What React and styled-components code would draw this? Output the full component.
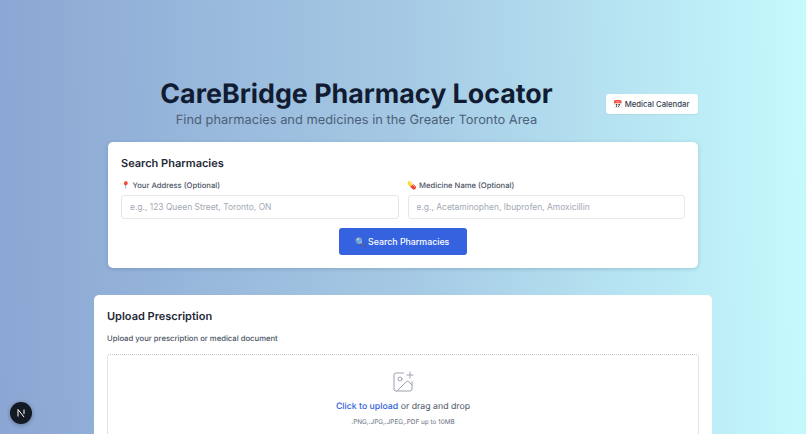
import React from "react";
import styled, { createGlobalStyle } from "styled-components";
import { ImagePlus } from "lucide-react";

const Global = createGlobalStyle`
  html, body { margin: 0; height: 100%; overflow: hidden; }
  body { font-family: Inter, "Liberation Sans", sans-serif; text-rendering: geometricPrecision; }
  * { box-sizing: border-box; }
`;

const Page = styled.div`
  width: 806px;
  height: 434px;
  overflow: hidden;
  background: linear-gradient(89deg, #8ba6d3 0%, #a5c9e4 50%, #c5fafd 100%);
  padding-top: 78px;
  display: flex;
  flex-direction: column;
  align-items: center;
`;

const Header = styled.header`
  width: 590px;
  height: 64px;
  flex: none;
  display: flex;
  align-items: flex-start;
`;

const TitleBlock = styled.div`
  flex: 1;
  padding-right: 1px;
  text-align: center;
`;

const Title = styled.h1`
  margin: 0;
  font-size: 26.8px;
  line-height: 30px;
  padding-top: 1px;
  font-weight: 700;
  color: #111c33;
`;

const Subtitle = styled.p`
  margin: 2px 0 0;
  font-size: 12.86px;
  line-height: 20px;
  color: #4d6079;
`;

const CalendarButton = styled.button`
  width: 92px;
  height: 20px;
  margin-top: 16px;
  border: 0;
  border-radius: 3px;
  background: #fff;
  color: #374151;
  font: 500 7.75px Inter, sans-serif;
  padding: 0 2px 0 0;
  box-shadow: 0 1px 2px rgba(0,0,0,.06);
`;

const SearchCard = styled.section`
  width: 590px;
  height: 126px;
  flex: none;
  background: #fff;
  border-radius: 5px;
  padding: 14px 13px;
  box-shadow: 0 1px 4px rgba(30,60,100,.2);
`;

const CardTitle = styled.h2`
  margin: 0;
  font-size: 11px;
  line-height: 15px;
  font-weight: 600;
  color: #1f2937;
`;

const Fields = styled.div`
  display: grid;
  grid-template-columns: 1fr 1fr;
  gap: 9px;
  margin-top: 8px;
`;

const Field = styled.div`
  display: flex;
  flex-direction: column;
  gap: 3px;
`;

const Label = styled.label`
  font-size: 7.65px;
  line-height: 13px;
  font-weight: 500;
  color: #4b5563;
`;

const Input = styled.input`
  height: 24px;
  border: 1px solid #e5e7eb;
  border-radius: 3px;
  padding: 0 8px;
  font: 400 8.45px Inter, sans-serif;
  &::placeholder { color: #a3a9b4; }
`;

const SearchRow = styled.div`
  display: flex;
  justify-content: center;
  margin-top: 9px;
`;

const SearchButton = styled.button`
  width: 128px;
  height: 27px;
  border: 0;
  border-radius: 3px;
  background: #3563e0;
  color: #fff;
  font: 500 8.8px Inter, sans-serif;
  padding: 0 2px 0 0;
`;

const UploadCard = styled.section`
  width: 618px;
  margin-top: 27px;
  height: 200px;
  flex: none;
  background: #fff;
  border-radius: 5px;
  padding: 14px 13px;
`;

const UploadTitle = styled.h2`
  margin: 0;
  font-size: 11px;
  line-height: 15px;
  font-weight: 600;
  color: #1f2937;
`;

const UploadNote = styled.p`
  margin: 9px 0 0;
  font-size: 7.7px;
  line-height: 12px;
  font-weight: 500;
  color: #4b5563;
`;

const DropZone = styled.div`
  margin-top: 9px;
  height: 160px;
  border: 1px dotted #c4c8cf;
  border-radius: 3px;
  display: flex;
  flex-direction: column;
  align-items: center;
  padding-top: 15px;
  color: #9ca3af;
`;

const DropText = styled.p`
  margin: 6px 0 0;
  font-size: 8.75px;
  line-height: 14px;
  color: #4b5563;
`;

const Link = styled.span`
  color: #3563e0;
  font-weight: 500;
`;

const DropHint = styled.p`
  margin: 4px 0 0;
  font-size: 6.4px;
  line-height: 9px;
  color: #6b7280;
`;

const DevBadge = styled.div`
  position: fixed;
  left: 10px;
  top: 402px;
  width: 22px;
  height: 22px;
  border-radius: 50%;
  background: #141a24;
  color: #fff;
  display: flex;
  align-items: center;
  justify-content: center;
  box-shadow: 0 1px 4px rgba(0,0,0,.3);
`;

export default function App() {
  return (
    <>
      <Global />
      <Page>
        <Header>
          <TitleBlock>
            <Title>CareBridge Pharmacy Locator</Title>
            <Subtitle>Find pharmacies and medicines in the Greater Toronto Area</Subtitle>
          </TitleBlock>
          <CalendarButton>📅 Medical Calendar</CalendarButton>
        </Header>
        <SearchCard>
          <CardTitle>Search Pharmacies</CardTitle>
          <Fields>
            <Field>
              <Label>📍 Your Address (Optional)</Label>
              <Input placeholder="e.g., 123 Queen Street, Toronto, ON" />
            </Field>
            <Field>
              <Label>💊 Medicine Name (Optional)</Label>
              <Input placeholder="e.g., Acetaminophen, Ibuprofen, Amoxicillin" />
            </Field>
          </Fields>
          <SearchRow>
            <SearchButton>🔍 Search Pharmacies</SearchButton>
          </SearchRow>
        </SearchCard>
        <UploadCard>
          <UploadTitle>Upload Prescription</UploadTitle>
          <UploadNote>Upload your prescription or medical document</UploadNote>
          <DropZone>
            <ImagePlus size={24} strokeWidth={1} />
            <DropText><Link>Click to upload</Link> or drag and drop</DropText>
            <DropHint>.PNG,.JPG,.JPEG,.PDF up to 10MB</DropHint>
          </DropZone>
        </UploadCard>
        <DevBadge>
          <svg width="10" height="10" viewBox="0 0 10 10" fill="none" stroke="#fff" strokeWidth="1">
            <path d="M2 8.5V1.5L8 9M8 1.5V6" />
          </svg>
        </DevBadge>
      </Page>
    </>
  );
}
